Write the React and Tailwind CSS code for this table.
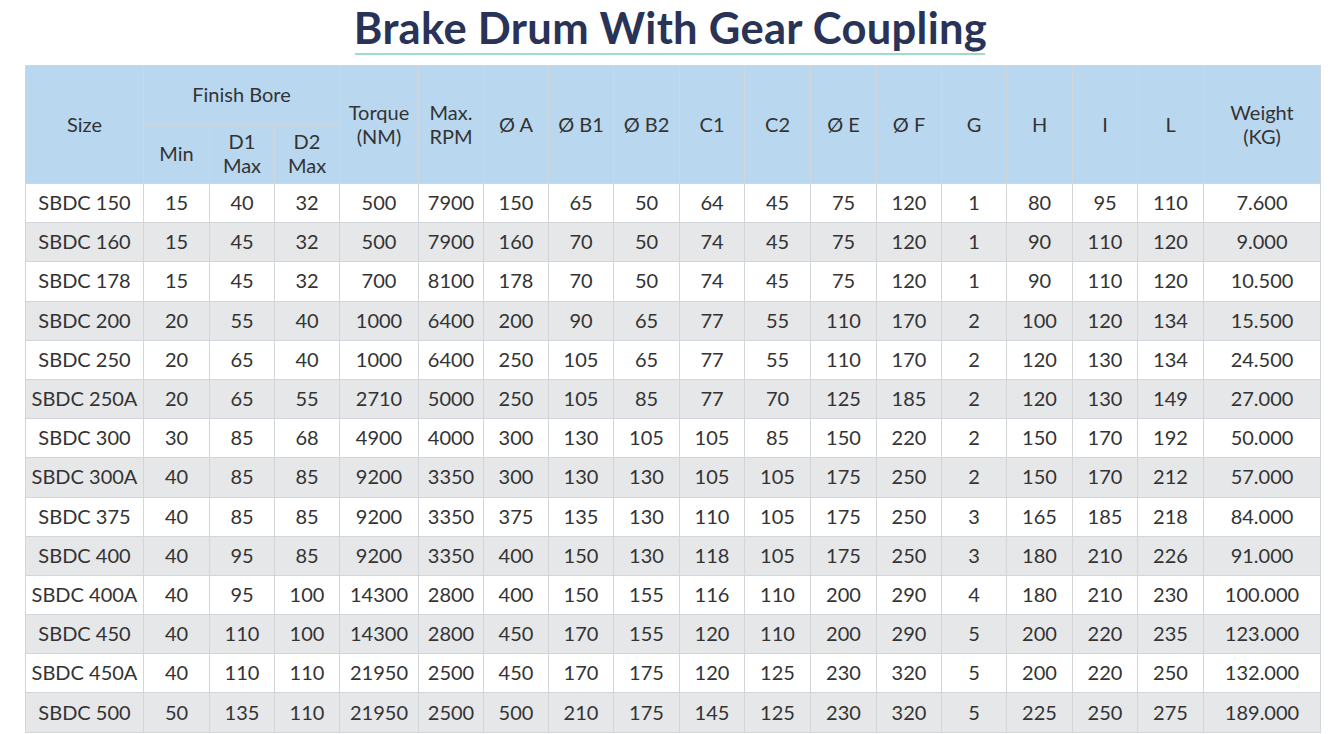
import React from "react";

const widths = [118, 66, 65, 65, 79, 65, 65, 65, 66, 65, 66, 66, 65, 65, 66, 65, 66, 117];

const rows = [
	["SBDC 150", 15, 40, 32, 500, 7900, 150, 65, 50, 64, 45, 75, 120, 1, 80, 95, 110, "7.600"],
	["SBDC 160", 15, 45, 32, 500, 7900, 160, 70, 50, 74, 45, 75, 120, 1, 90, 110, 120, "9.000"],
	["SBDC 178", 15, 45, 32, 700, 8100, 178, 70, 50, 74, 45, 75, 120, 1, 90, 110, 120, "10.500"],
	["SBDC 200", 20, 55, 40, 1000, 6400, 200, 90, 65, 77, 55, 110, 170, 2, 100, 120, 134, "15.500"],
	["SBDC 250", 20, 65, 40, 1000, 6400, 250, 105, 65, 77, 55, 110, 170, 2, 120, 130, 134, "24.500"],
	["SBDC 250A", 20, 65, 55, 2710, 5000, 250, 105, 85, 77, 70, 125, 185, 2, 120, 130, 149, "27.000"],
	["SBDC 300", 30, 85, 68, 4900, 4000, 300, 130, 105, 105, 85, 150, 220, 2, 150, 170, 192, "50.000"],
	["SBDC 300A", 40, 85, 85, 9200, 3350, 300, 130, 130, 105, 105, 175, 250, 2, 150, 170, 212, "57.000"],
	["SBDC 375", 40, 85, 85, 9200, 3350, 375, 135, 130, 110, 105, 175, 250, 3, 165, 185, 218, "84.000"],
	["SBDC 400", 40, 95, 85, 9200, 3350, 400, 150, 130, 118, 105, 175, 250, 3, 180, 210, 226, "91.000"],
	["SBDC 400A", 40, 95, 100, 14300, 2800, 400, 150, 155, 116, 110, 200, 290, 4, 180, 210, 230, "100.000"],
	["SBDC 450", 40, 110, 100, 14300, 2800, 450, 170, 155, 120, 110, 200, 290, 5, 200, 220, 235, "123.000"],
	["SBDC 450A", 40, 110, 110, 21950, 2500, 450, 170, 175, 120, 125, 230, 320, 5, 200, 220, 250, "132.000"],
	["SBDC 500", 50, 135, 110, 21950, 2500, 500, 210, 175, 145, 125, 230, 320, 5, 225, 250, 275, "189.000"],
];

const th = "border border-[#d2d6da] font-normal text-center align-middle leading-[24px] px-0 pb-[2px]";
const td = "border border-[#d2d6da] text-center align-middle p-0 pb-[2px] whitespace-nowrap";

export default function App() {
	return (
		<div className="w-[1341px] h-[734px] overflow-hidden bg-white font-['Lato','Liberation_Sans',sans-serif] text-[#333]">
			{/* Title */}
			<div className="flex justify-center pt-[2px]">
				<div className="flex flex-col items-center">
					<h1 className="text-[43.5px] leading-[50px] font-bold text-[#283357] tracking-[0.3px]">
						Brake Drum With Gear Coupling
					</h1>
					<div className="h-[2px] w-[630px] bg-[#9edcc4] mt-[1px]" />
				</div>
			</div>
			{/* Table */}
			<div className="pl-[25px] pt-[10px]">
				<table className="border-collapse table-fixed text-[20px]" style={{ width: 1295 }}>
					<colgroup>
						{widths.map((w, i) => (
							<col key={i} style={{ width: w }} />
						))}
					</colgroup>
					<thead className="bg-[#b9d8f0]">
						<tr className="h-[59px]">
							<th rowSpan={2} className={th}>Size</th>
							<th colSpan={3} className={th}>Finish Bore</th>
							<th rowSpan={2} className={th}>Torque<br />(NM)</th>
							<th rowSpan={2} className={th}>Max.<br />RPM</th>
							<th rowSpan={2} className={th}>Ø A</th>
							<th rowSpan={2} className={th}>Ø B1</th>
							<th rowSpan={2} className={th}>Ø B2</th>
							<th rowSpan={2} className={th}>C1</th>
							<th rowSpan={2} className={th}>C2</th>
							<th rowSpan={2} className={th}>Ø E</th>
							<th rowSpan={2} className={th}>Ø F</th>
							<th rowSpan={2} className={th}>G</th>
							<th rowSpan={2} className={th}>H</th>
							<th rowSpan={2} className={th}>I</th>
							<th rowSpan={2} className={th}>L</th>
							<th rowSpan={2} className={th}>Weight<br />(KG)</th>
						</tr>
						<tr className="h-[59px]">
							<th className={th}>Min</th>
							<th className={th}>D1<br />Max</th>
							<th className={th}>D2<br />Max</th>
						</tr>
					</thead>
					<tbody>
						{rows.map((r, i) => (
							<tr key={i} className={i % 2 === 0 ? "h-[39.2px] bg-white" : "h-[39.2px] bg-[#e6e7e9]"}>
								{r.map((c, j) => (
									<td key={j} className={td}>{c}</td>
								))}
							</tr>
						))}
					</tbody>
				</table>
			</div>
		</div>
	);
}
